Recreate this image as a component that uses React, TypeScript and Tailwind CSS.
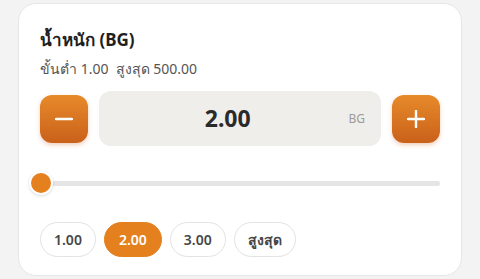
import React, { useState } from 'react';

const presets = ['1.00', '2.00', '3.00', 'สูงสุด'];

export default function App() {
  const [value, setValue] = useState(2);
  const min = 1;
  const max = 500;
  const pct = ((value - min) / (max - min)) * 100;

  return (
    <div className="w-[480px] h-[279px] bg-[#f3f3f3] pt-[3px] pl-[18px] font-['Noto_Sans',sans-serif]">
      <div className="w-[444px] h-[273px] bg-white border border-[#e6e6e6] rounded-[18px] px-[21px] pt-[24px]">
        {/* Header */}
        <h2 className="text-[17px] leading-[24px] font-bold text-[#1f1f1f]">น้ำหนัก (BG)</h2>
        <p className="mt-[7px] text-[14px] leading-[20px] text-[#555]">
          ขั้นต่ำ 1.00&nbsp;&nbsp;สูงสุด 500.00
        </p>

        {/* Stepper */}
        <div className="mt-[12px] flex items-center gap-[11px]">
          <button
            onClick={() => setValue(v => Math.max(min, v - 1))}
            className="w-12 h-12 rounded-[12px] bg-gradient-to-b from-[#e78a2a] to-[#c9611a] shadow-[0_2px_4px_rgba(201,97,26,0.3)] flex items-center justify-center"
          >
            <svg width="18" height="18" viewBox="0 0 18 18">
              <path d="M1 9h16" stroke="white" strokeWidth="2.4" strokeLinecap="round" />
            </svg>
          </button>
          <div className="flex-1 h-[55px] rounded-[12px] bg-[#f0eeeb] flex items-center px-4 gap-2">
            <span className="flex-1 text-center text-[23px] font-bold text-[#2a2a2a]">{value.toFixed(2)}</span>
            <span className="text-[12px] text-[#9a9a9a]">BG</span>
          </div>
          <button
            onClick={() => setValue(v => Math.min(max, v + 1))}
            className="w-12 h-12 rounded-[12px] bg-gradient-to-b from-[#e78a2a] to-[#c9611a] shadow-[0_2px_4px_rgba(201,97,26,0.3)] flex items-center justify-center"
          >
            <svg width="18" height="18" viewBox="0 0 18 18">
              <path d="M1 9h16M9 1v16" stroke="white" strokeWidth="2.4" strokeLinecap="round" />
            </svg>
          </button>
        </div>

        {/* Slider */}
        <div className="mt-[25px] relative h-6 flex items-center">
          <div className="w-full h-[5px] rounded-full bg-[#e5e5e5]" />
          <div
            className="absolute top-0 w-6 h-6 -ml-[12px] rounded-full bg-[#e5801f] border-2 border-white shadow-[0_1px_3px_rgba(0,0,0,0.15)]"
            style={{ left: `${pct}%` }}
          />
        </div>

        {/* Presets */}
        <div className="mt-[27px] flex gap-2">
          {presets.map(p => {
            const active = p === value.toFixed(2);
            return (
              <button
                key={p}
                onClick={() => setValue(p === 'สูงสุด' ? max : parseFloat(p))}
                className={
                  active
                    ? 'h-[35px] px-[14px] rounded-full bg-[#e4801e] border border-[#e4801e] text-white text-[14px] font-semibold'
                    : 'h-[35px] px-[13px] rounded-full bg-white border border-[#e3e3e3] text-[#474747] text-[14px] font-semibold'
                }
              >
                {p}
              </button>
            );
          })}
        </div>
      </div>
    </div>
  );
}
